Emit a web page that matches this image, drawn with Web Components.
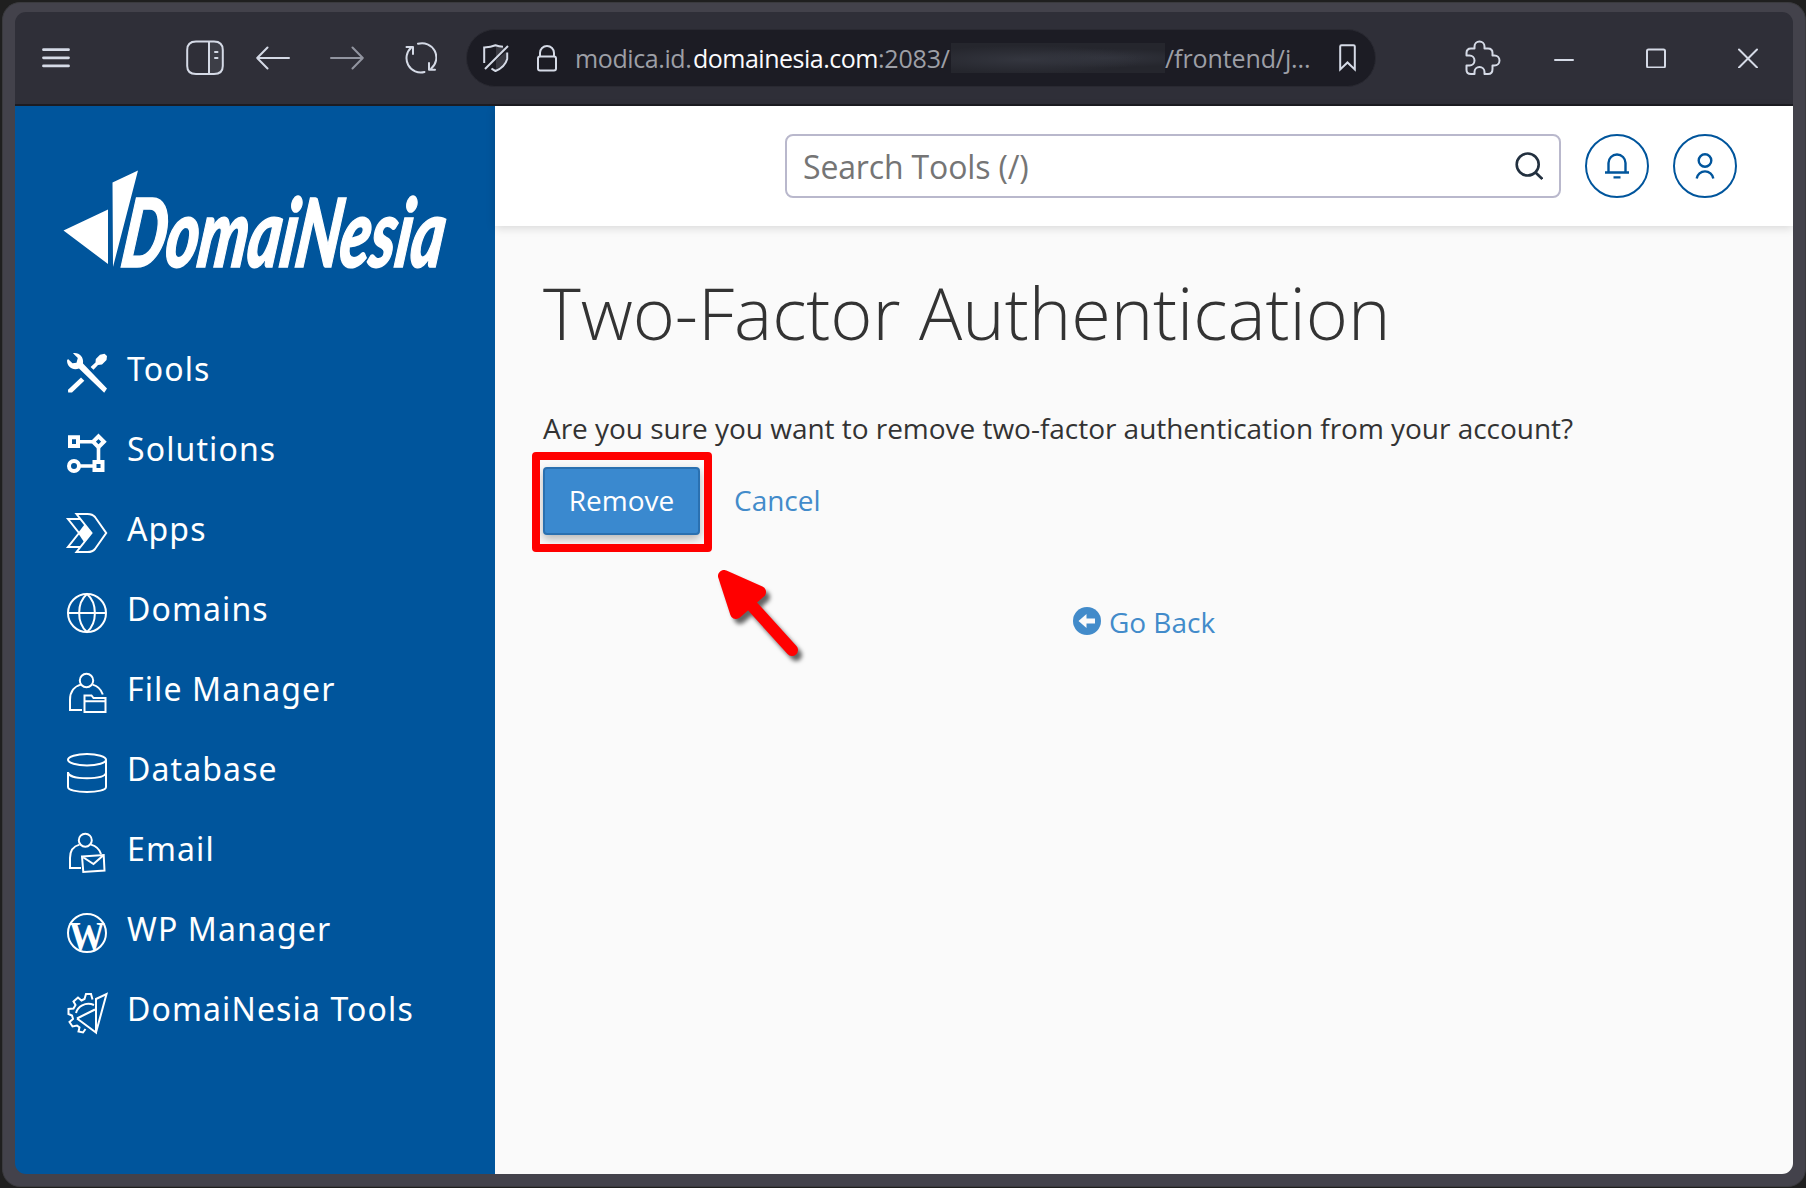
<!DOCTYPE html>
<html lang="en">
<head>
<meta charset="utf-8">
<title>Two-Factor Authentication</title>
<style>
    html, body {
        margin: 0;
        height: 100%;
        overflow: hidden;
        background: #1f1f1f;
        font-family: "Open Sans", "Noto Sans", sans-serif;
    }
</style>
</head>
<body>
<browser-window>
    <browser-toolbar slot="toolbar"></browser-toolbar>
    <side-menu slot="side">
        <menu-item icon="tools">Tools</menu-item>
        <menu-item icon="solutions">Solutions</menu-item>
        <menu-item icon="apps">Apps</menu-item>
        <menu-item icon="domains">Domains</menu-item>
        <menu-item icon="files">File Manager</menu-item>
        <menu-item icon="database">Database</menu-item>
        <menu-item icon="email">Email</menu-item>
        <menu-item icon="wp">WP Manager</menu-item>
        <menu-item icon="dntools">DomaiNesia Tools</menu-item>
    </side-menu>
    <page-header></page-header>
    <confirm-panel>
        <span slot="title">Two-Factor Authentication</span>
        <span slot="question">Are you sure you want to remove two-factor authentication from your account?</span>
    </confirm-panel>
</browser-window>

<script>
const menuIcons = {
    tools: `
        <g fill="#fff" stroke="none">
            <path d="M6 .2C12-.8 17 4 16 10.500L40 35.500 37.200 39.800 12 15.500C6 18 0 14 0 7.500L1 6 5.500 10.300 9.500 9.800 10.800 5Z"/>
            <path d="M14 24.500 17.300 27.800 5 39.600 1.200 39.600 1 36.800Z"/>
            <path d="M37.500.8 40 3 39.500 7 35 11.500 31 12 26.500 16.800 23.600 14 28.500 9.500 28.800 6 33 1.800Z"/>
        </g>`,
    solutions: `
        <g stroke-width="4"><path d="M3 4.200H11V13H3Z M31.500 3.300 36.900 8.700 31.500 14.100 26.100 8.700Z M27.500 29H35.500V37H27.500Z"/>
        <circle cx="7" cy="33" r="5"/></g>
        <path stroke-width="3.600" d="M13 8.700H25M31.500 15V27M13 33H26"/>`,
    apps: `
        <path d="M9.500 1H20.500Q25.500 1 28 4L39.200 20 28 36Q25.500 39 20.500 39H9.500L24.500 20Z"/>
        <path d="M13 6H1L12 20 1 34H13"/>
        <path fill="#fff" stroke="none" d="M11 20 17.500 11.500 24.800 20 17 29Z"/>`,
    domains: `
        <circle cx="20" cy="20" r="19"/>
        <path d="M1 20H39M20 1C9.500 10 9.500 30 20 39C30.500 30 30.500 10 20 1Z"/>`,
    files: `
        <circle cx="19.500" cy="7.500" r="6.700"/>
        <path d="M15 37H3V27C3 18 8 13 14 11.600M25.500 11.600C31 13 34 16 35.800 21.500"/>
        <path d="M17.500 39V22.500H24.500L26.500 25H38.500V39ZM17.500 28.300H38.500"/>`,
    database: `
        <ellipse cx="20" cy="6.700" rx="19" ry="5.700"/>
        <path d="M39 6.700V34C39 37 30.500 39 20 39S1 37 1 34V19C1 23 9 25.200 20 25.200C30 25.200 38 23.500 39 20"/>`,
    email: `
        <circle cx="18.300" cy="7.200" r="6.500"/>
        <path d="M14 35H3V25C3 17 7 13 12.500 11.600M24 11.600C29 13 32.500 16 34 21"/>
        <path d="M15 23.500 36.700 22 37.500 37.500 16.300 39ZM15 23.500 26.500 31 36.700 22"/>`,
    wp: `
        <circle cx="20" cy="20" r="19"/>
        <text x="20" y="36" text-anchor="middle" textLength="36" lengthAdjust="spacingAndGlyphs"
            font-family="Liberation Serif, serif" font-weight="700" font-size="41" letter-spacing="0" fill="#fff" stroke="none">W</text>`,
    dntools: `
        <path d="M25.500 6.500 24 1H19L17.500 6 14.500 7.500 11 4.500 6.500 8.500 8.500 12 6.500 15.500 1.500 16V21L5 22.500 6 26 2.500 29 5.500 33.500 10 32.500 12.500 34.500 11.500 38.500 16 39.500 18.500 36"/>
        <path d="M9 20C10.500 14 18 8.500 27 12M10 25.500 28 16.500M10 25.500 29 39.500V6L39.500 1 29 39.500"/>`
};

class BrowserWindow extends HTMLElement {
    constructor() {
        super();
        this.attachShadow({ mode: 'open' }).innerHTML = `
        <style>
            :host {
                display: flex;
                box-sizing: border-box;
                width: 1806px;
                height: 1188px;
                padding: 2px 0 1px 2px;
            }
            .frame {
                display: flex;
                flex: 1;
                box-sizing: border-box;
                padding: 9px 12px 12px 12px;
                border: 1px solid #3a3a3e;
                border-radius: 18px;
                background: #43424b;
            }
            .inner {
                flex: 1;
                display: flex;
                flex-direction: column;
                overflow: hidden;
                border-radius: 11px;
            }
            .body { display: flex; flex: 1; }
            main {
                flex: 1;
                display: flex;
                flex-direction: column;
                background: #fafafa;
            }
        </style>
        <div class="frame">
            <div class="inner">
                <slot name="toolbar"></slot>
                <div class="body">
                    <slot name="side"></slot>
                    <main><slot></slot></main>
                </div>
            </div>
        </div>
        `;
    }
}
customElements.define('browser-window', BrowserWindow);


class BrowserToolbar extends HTMLElement {
    constructor() {
        super();
        this.attachShadow({ mode: 'open' }).innerHTML = `
        <style>
            :host {
                display: flex;
                align-items: center;
                box-sizing: border-box;
                height: 94px;
                padding: 0 35px 0 27px;
                background: #2f2f38;
                border-bottom: 2px solid #1c1c22;
            }
            svg {
                display: block;
                flex: none;
                fill: none;
                stroke: #d5dae6;
                stroke-width: 2;
                stroke-linecap: round;
                stroke-linejoin: round;
            }
            .group { display: flex; align-items: center; }
            .panel { margin: 0 32px 0 116px; }
            .forward { margin: 0 41px 0 40px; opacity: .6; }
            .controls { gap: 72px; margin-left: 53px; }
            address-bar { margin: 0 89px 0 29px; }
        </style>
        <svg width="28" height="20" style="stroke-width:2.800"><path d="M1.500 1.700H26.500M1.500 9.800H26.500M1.500 17.900H26.500"/></svg>
        <svg class="panel" width="38" height="36" viewBox="0 0 38 36">
            <path fill="#3d3e47" stroke="none" d="M23 2H30Q37 2 37 10V26Q37 34 30 34H23Z"/>
            <path d="M10 1.500H28Q36.800 1.500 36.800 10V26Q36.800 34 28 34H10Q1.200 34 1.200 26V10Q1.200 1.500 10 1.500ZM23 1.500V34M29 12H31.500M29 18H31.500"/>
        </svg>
        <svg width="34" height="24"><path d="M11.500 1.500 1.200 12 11.500 22.500M1.200 12H33"/></svg>
        <svg class="forward" width="34" height="24"><path d="M22.500 1.500 32.800 12 22.500 22.500M32.800 12H1"/></svg>
        <svg width="32" height="32" viewBox="0 0 32 32">
            <path d="M13 1.800A14.300 14.300 0 0 1 26.200 26.500M19.500 30A14.300 14.300 0 0 1 6.300 5.500M1.500 5H8V12M30 27.800H24V21"/>
        </svg>
        <address-bar></address-bar>
        <svg width="36" height="36" viewBox="0 0 36 36">
            <path d="M9.500 8.500V6.500A5 5 0 0 1 19.500 6.500V8.500H23Q27.500 8.500 27.500 13V15.500H29.500A5 5 0 0 1 29.500 25.500H27.500V29Q27.500 34 23 34H19.500V32A5 5 0 0 0 9.500 32V34H6Q1.500 34 1.500 30V25.500H4.500A5 5 0 0 0 4.500 15.500H1.500V13Q1.500 8.500 6 8.500Z"/>
        </svg>
        <div class="group controls">
            <svg width="20" height="20"><path d="M1 12H19"/></svg>
            <svg width="20" height="20"><rect x="1" y="1.500" width="18" height="18" rx="1.500"/></svg>
            <svg width="20" height="20" viewBox="0 0 20 20"><path d="M1 1.500 19 19.500M19 1.500 1 19.500"/></svg>
        </div>
        `;
    }
}
customElements.define('browser-toolbar', BrowserToolbar);


class AddressBar extends HTMLElement {
    constructor() {
        super();
        this.attachShadow({ mode: 'open' }).innerHTML = `
        <style>
            :host {
                display: flex;
                align-items: center;
                box-sizing: border-box;
                width: 910px;
                height: 58px;
                padding: 0 18px 0 16px;
                border: 1px solid #292931;
                border-radius: 29px;
                background: #1c1c24;
                color: #9d9fa6;
                font-size: 25px;
            }
            svg {
                display: block;
                flex: none;
                fill: none;
                stroke: #d5dae6;
                stroke-width: 2;
            }
            .lock { margin: 0 18px 0 28px; }
            .url {
                display: flex;
                flex: 1;
                align-items: center;
                white-space: pre;
                line-height: 34px;
            }
            .sub { width: 118px; letter-spacing: -.4px; }
            .host { width: 185px; color: #fbfbfe; letter-spacing: -.5px; }
            .port { width: 73px; letter-spacing: -.2px; }
            .path { letter-spacing: -.1px; }
            .hidden {
                width: 214px;
                height: 30px;
                background:
                    radial-gradient(ellipse at 35% 55%, #34363f, transparent 60%),
                    radial-gradient(ellipse at 72% 50%, #32343d, transparent 45%),
                    #25262d;
            }
        </style>
        <svg width="26" height="28" viewBox="0 0 26 28">
            <path fill="#3a3a42" stroke="none" d="M13 2V13L22 4Z M13 25V16L23 8V17Q20 22 13 25Z"/>
            <path d="M1.200 19V3.500Q8 3 12.500 1.200Q16 2.300 20 2.800M24.200 8.500V15Q22 23 12.500 27Q10.500 26 8.500 24.500M25 2 2 25"/>
        </svg>
        <svg class="lock" width="20" height="27" viewBox="0 0 20 27">
            <path d="M3 11.500V8A7 7 0 0 1 17 8V11.500"/>
            <rect x="1" y="11.500" width="18" height="14" rx="2"/>
        </svg>
        <div class="url"><span class="sub">modica.id.</span><span class="host">domainesia.com</span><span class="port">:2083/</span><span class="hidden"></span><span class="path">/frontend/j...</span></div>
        <svg width="18" height="28" viewBox="0 0 18 28"><path d="M1.200 25.500V2.500Q1.200 1.200 2.500 1.200H14.500Q15.800 1.200 15.800 2.500V25.500L8.500 18.500Z"/></svg>
        `;
    }
}
customElements.define('address-bar', AddressBar);


class SideMenu extends HTMLElement {
    constructor() {
        super();
        this.attachShadow({ mode: 'open' }).innerHTML = `
        <style>
            :host {
                display: flex;
                flex-direction: column;
                box-sizing: border-box;
                width: 480px;
                padding: 60px 0 0 45px;
                background: #00559c;
                color: #fff;
            }
            svg { display: block; overflow: visible; }
            nav {
                display: flex;
                flex-direction: column;
                margin-top: 55px;
            }
        </style>
        <svg width="392" height="110" viewBox="0 0 392 110" fill="#fff">
            <path d="M3.500 64.500 48 43.500V98Z M52.500 16.500 78 4.500 53 101Z"/>
            <g transform="translate(59 101) skewX(-8)">
                <text x="0" y="0" font-family="Lato" font-weight="900" font-style="italic" font-size="95"
                    stroke="#fff" stroke-width="1.600" textLength="322" lengthAdjust="spacingAndGlyphs">DomaiNesia</text>
            </g>
        </svg>
        <nav><slot></slot></nav>
        `;
    }
}
customElements.define('side-menu', SideMenu);


class MenuItem extends HTMLElement {
    constructor() {
        super();
        const icon = this.getAttribute('icon');
        this.attachShadow({ mode: 'open' }).innerHTML = `
        <style>
            :host {
                display: flex;
                align-items: center;
                gap: 20px;
                height: 80px;
                padding-left: 7px;
                font: 32px "Noto Sans", sans-serif;
                letter-spacing: 1.120px;
            }
            svg {
                flex: none;
                margin-top: 3px;
                overflow: visible;
                fill: none;
                stroke: #fff;
                stroke-width: 2;
            }
            span { margin-top: -6px; }
        </style>
        <svg width="40" height="40" viewBox="0 0 40 40">${menuIcons[icon]}</svg>
        <span><slot></slot></span>
        `;
    }
}
customElements.define('menu-item', MenuItem);


class PageHeader extends HTMLElement {
    constructor() {
        super();
        this.attachShadow({ mode: 'open' }).innerHTML = `
        <style>
            :host {
                display: flex;
                align-items: center;
                justify-content: flex-end;
                gap: 24px;
                height: 120px;
                padding: 0 56px 0 0;
                background: #fff;
                box-shadow: 0 2px 9px rgba(0, 0, 0, .14);
            }
            .search {
                display: flex;
                align-items: center;
                justify-content: space-between;
                box-sizing: border-box;
                width: 776px;
                height: 64px;
                padding: 0 16px;
                border: 2px solid #b9b8cc;
                border-radius: 8px;
                color: #757575;
                font-size: 32px;
                letter-spacing: -.15px;
            }
            .round {
                display: flex;
                align-items: center;
                justify-content: center;
                box-sizing: border-box;
                width: 64px;
                height: 64px;
                border: 2px solid #00559c;
                border-radius: 50%;
            }
            svg { display: block; fill: none; stroke: #00559c; stroke-width: 2.400; }
        </style>
        <div class="search">
            <span>Search Tools (/)</span>
            <svg width="28" height="28" viewBox="0 0 28 28" style="stroke:#22303f;stroke-width:2.600"><circle cx="12.700" cy="12.500" r="11"/><path d="M20.500 20.500 27.300 27"/></svg>
        </div>
        <div class="round">
            <svg width="24" height="26" viewBox="0 0 24 26"><path d="M0 19.500H24M3.500 19.500V10A8.500 8.500 0 0 1 20.500 10V19.500M8.500 24.400H15.500"/></svg>
        </div>
        <div class="round">
            <svg width="20" height="26" viewBox="0 0 20 26"><circle cx="10" cy="7.500" r="6.300"/><path d="M1.700 25.500A8.400 8.400 0 0 1 18.300 25.500"/></svg>
        </div>
        `;
    }
}
customElements.define('page-header', PageHeader);


class ConfirmPanel extends HTMLElement {
    constructor() {
        super();
        this.attachShadow({ mode: 'open' }).innerHTML = `
        <style>
            :host {
                display: block;
                padding: 0 48px;
                color: #333;
                font-size: 28px;
            }
            h1 {
                margin: 37px 0 0;
                font-size: 72px;
                font-weight: 300;
                line-height: 98px;
                letter-spacing: -.06px;
                white-space: nowrap;
            }
            p {
                margin: 47px 0 19px;
                line-height: 40px;
                letter-spacing: -.03px;
                white-space: nowrap;
            }
            .actions {
                position: relative;
                display: flex;
                align-items: center;
                gap: 34px;
            }
            button {
                box-sizing: border-box;
                width: 157px;
                height: 68px;
                padding: 0 0 2px;
                border: 2px solid #2a70b0;
                border-radius: 4px;
                background: #3a89cf;
                box-shadow: 0 4px 10px rgba(0, 0, 0, .28);
                color: #fff;
                font: inherit;
            }
            a { color: #428bca; text-decoration: none; }
            .actions a { padding-bottom: 2px; }
            /* click hint drawn over the button */
            .ring {
                position: absolute;
                left: -11px;
                top: -15px;
                box-sizing: border-box;
                width: 180px;
                height: 100px;
                border: 8px solid #f00;
                border-radius: 4px;
            }
            .arrow {
                position: absolute;
                left: 167px;
                top: 95px;
                fill: #f00;
                stroke: #f00;
                stroke-width: 12;
                stroke-linecap: round;
                stroke-linejoin: round;
                filter: drop-shadow(4px 5px 2px rgba(0, 0, 0, .6));
            }
            .back {
                display: flex;
                justify-content: center;
                align-items: center;
                gap: 8px;
                margin-top: 67px;
                line-height: 40px;
            }
            .back svg { margin-top: -2px; }
        </style>
        <h1><slot name="title"></slot></h1>
        <p><slot name="question"></slot></p>
        <div class="actions">
            <button>Remove</button>
            <a>Cancel</a>
            <div class="ring"></div>
            <svg class="arrow" width="100" height="110"><path d="M14 14 50 30 26 51ZM34 35 82 88"/></svg>
        </div>
        <a class="back">
            <svg width="28" height="28" viewBox="0 0 28 28"><circle cx="14" cy="14" r="14" fill="#428bca"/><path fill="#fafafa" d="M5.500 14 13.500 7V11.500H22V16.500H13.500V21Z"/></svg>
            <span>Go Back</span>
        </a>
        `;
    }
}
customElements.define('confirm-panel', ConfirmPanel);
</script>
</body>
</html>
